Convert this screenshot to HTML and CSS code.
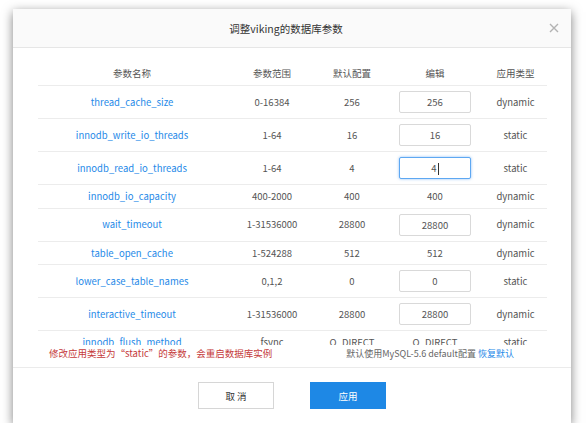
FILE: index.html
```html
<!DOCTYPE html>
<html lang="zh-CN">
<head>
<meta charset="utf-8">
<title>调整viking的数据库参数</title>
<link rel="stylesheet" href="styles.css">
</head>
<body>
<div class="dialog">
  <div class="dlg-header">
    <h1 class="dlg-title">调整viking的数据库参数</h1>
    <span class="dlg-close" aria-label="关闭">
      <svg width="10" height="10" viewBox="0 0 10 10"><path d="M1 1 L9 9 M9 1 L1 9" stroke="#b3b3b3" stroke-width="1.4" fill="none"/></svg>
    </span>
  </div>
  <div class="dlg-body">
    <div class="table-wrap">
      <table class="params">
        <colgroup>
          <col class="c-name"><col class="c-range"><col class="c-default"><col class="c-edit"><col class="c-type">
        </colgroup>
        <thead>
          <tr><th>参数名称</th><th>参数范围</th><th>默认配置</th><th>编辑</th><th>应用类型</th></tr>
        </thead>
        <tbody>
          <tr><td class="name">thread_cache_size</td><td>0-16384</td><td>256</td><td><span class="field">256</span></td><td>dynamic</td></tr>
          <tr><td class="name">innodb_write_io_threads</td><td>1-64</td><td>16</td><td><span class="field">16</span></td><td>static</td></tr>
          <tr><td class="name">innodb_read_io_threads</td><td>1-64</td><td>4</td><td><span class="field focused">4<span class="caret"></span></span></td><td>static</td></tr>
          <tr><td class="name">innodb_io_capacity</td><td>400-2000</td><td>400</td><td>400</td><td>dynamic</td></tr>
          <tr><td class="name">wait_timeout</td><td>1-31536000</td><td>28800</td><td><span class="field">28800</span></td><td>dynamic</td></tr>
          <tr><td class="name">table_open_cache</td><td>1-524288</td><td>512</td><td>512</td><td>dynamic</td></tr>
          <tr><td class="name">lower_case_table_names</td><td>0,1,2</td><td>0</td><td><span class="field">0</span></td><td>static</td></tr>
          <tr><td class="name">interactive_timeout</td><td>1-31536000</td><td>28800</td><td><span class="field">28800</span></td><td>dynamic</td></tr>
          <tr><td class="name">innodb_flush_method</td><td>fsync</td><td>O_DIRECT</td><td>O_DIRECT</td><td>static</td></tr>
        </tbody>
      </table>
    </div>
    <div class="notes">
      <span class="warn">修改应用类型为“static”的参数，会重启数据库实例</span>
      <span class="info">默认使用MySQL-5.6 default配置 <span class="link">恢复默认</span></span>
    </div>
  </div>
  <div class="dlg-footer">
    <button class="btn btn-cancel">取 消</button>
    <button class="btn btn-primary">应用</button>
  </div>
</div>
</body>
</html>
```

FILE: styles.css
```css
html, body {
  margin: 0;
  background: #ffffff;
}

body {
  padding: 9px 15px 0 13px;
  font-family: "Noto Sans CJK SC", "Noto Sans", sans-serif;
  font-size: 9.5px;
  color: #555;
}

.dialog {
  width: 558px;
  height: 414px;
  background: #fff;
  box-shadow: 0 3px 10px rgba(0, 0, 0, 0.5);
  display: flex;
  flex-direction: column;
}

.dlg-header {
  height: 38px;
  flex: none;
  display: flex;
  align-items: center;
  padding: 0 12px 0 10px;
  background: #fafafa;
  border-bottom: 1px solid #e6e6e6;
}

.dlg-title {
  flex: 1;
  margin: 0;
  text-align: center;
  font-size: 10.5px;
  font-weight: normal;
  color: #333;
}

.dlg-close {
  width: 10px;
  height: 10px;
  display: flex;
}

.dlg-body {
  flex: 1;
  padding: 14px 24px 0 25px;
  display: flex;
  flex-direction: column;
}

.table-wrap {
  height: 283px;
  overflow: hidden;
  flex: none;
}

.params {
  width: 100%;
  table-layout: fixed;
  border-collapse: collapse;
}

.c-name { width: 188px; }
.c-range { width: 92px; }
.c-default { width: 68px; }
.c-edit { width: 98px; }
.c-type { width: 63px; }

.params th {
  font-weight: normal;
  color: #555;
  padding: 5px 0;
  line-height: 13px;
  text-align: center;
  border-bottom: 1px solid #ececec;
}

.params td {
  padding: 5px 0;
  line-height: 12.5px;
  text-align: center;
  color: #555;
  border-bottom: 1px solid #ececec;
  white-space: nowrap;
}

.params td.name {
  color: #1f8ae8;
}

.field {
  display: block;
  box-sizing: border-box;
  width: 72px;
  height: 22px;
  margin: 0 auto;
  border: 1px solid #d9d9d9;
  border-radius: 2px;
  line-height: 20px;
  text-align: center;
  color: #555;
  background: #fff;
}

.field.focused {
  border-color: #5ea8f2;
  box-shadow: 0 0 3px rgba(70, 150, 240, 0.6);
}

.caret {
  display: inline-block;
  width: 1px;
  height: 12px;
  background: #333;
  vertical-align: middle;
  margin-left: 1px;
}

.notes {
  display: flex;
  justify-content: space-between;
  align-items: center;
  padding: 2px 33px 0 11px;
  line-height: 13px;
}

.warn {
  color: #c53a3a;
}

.info {
  color: #666;
  font-size: 9px;
}

.link {
  color: #1f8ae8;
}

.dlg-footer {
  height: 55px;
  flex: none;
  border-top: 1px solid #ebebeb;
  display: flex;
  align-items: center;
  justify-content: center;
  gap: 36px;
}

.btn {
  width: 76px;
  height: 27px;
  font-family: inherit;
  font-size: 9.5px;
  border-radius: 0;
  cursor: pointer;
}

.btn-cancel {
  background: #fff;
  border: 1px solid #d6d6d6;
  color: #333;
}

.btn-primary {
  background: #1e88e5;
  border: 1px solid #1e88e5;
  color: #fff;
}
```
